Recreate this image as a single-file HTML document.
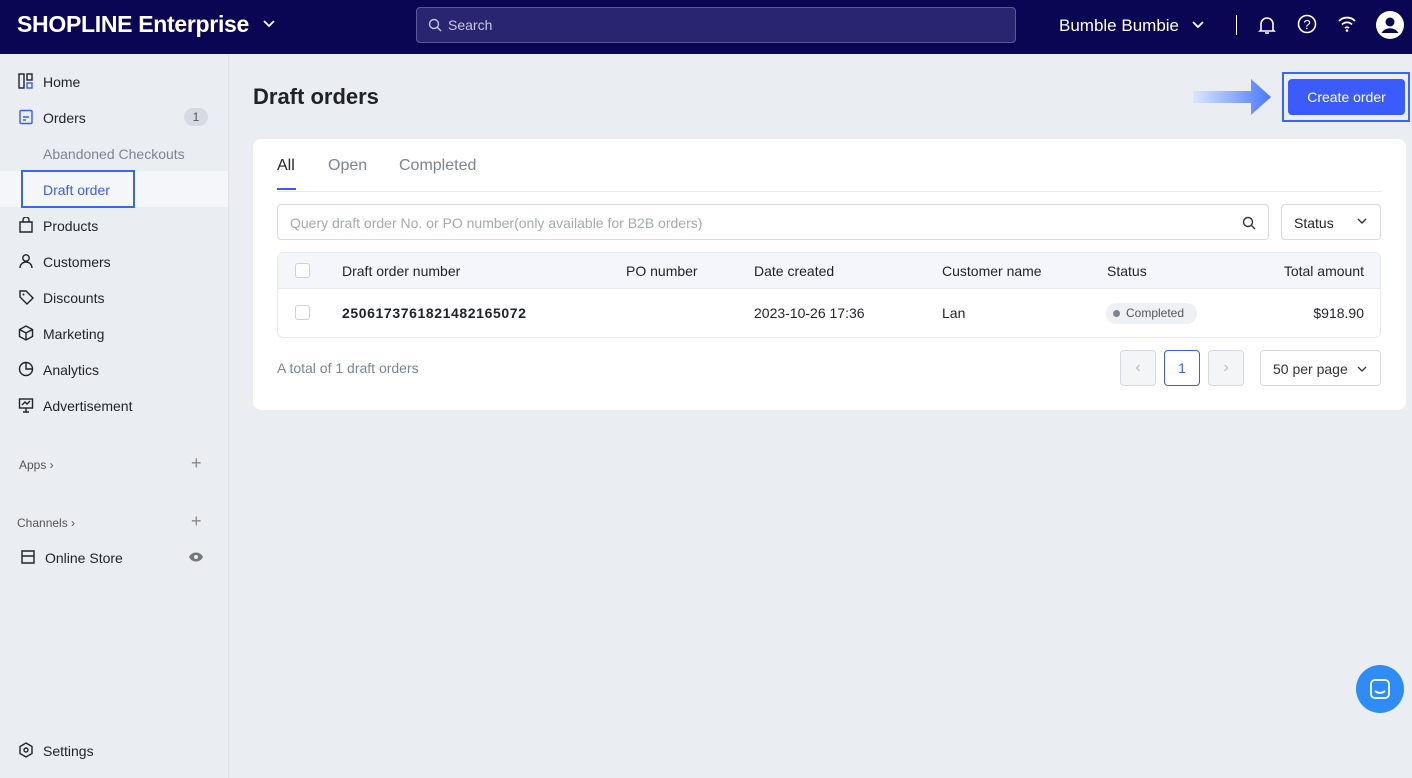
<!DOCTYPE html>
<html><head><style>
*{box-sizing:border-box;margin:0;padding:0}
body{width:1412px;height:778px;overflow:hidden;font-family:"Liberation Sans",sans-serif;background:#eaedf2;color:#1f2329;position:relative}
.top{position:absolute;left:0;top:0;width:1412px;height:54px;background:#0b0653;color:#fff}
.logo{position:absolute;left:17px;top:11px;font-size:23px;font-weight:bold;letter-spacing:-0.3px}
.search{position:absolute;left:416px;top:7px;width:600px;height:36px;border:1px solid #5a5896;border-radius:4px;background:#2a2570;color:#c9c8e0;font-size:14px;padding:9px 0 0 31px}
.side{position:absolute;left:0;top:54px;width:229px;height:724px;background:#eaedf2;border-right:1px solid #dde0e6}
.it{position:absolute;left:0;width:228px;height:36px;font-size:14px;padding:11px 0 0 43px;color:#1f2329}
.ic{position:absolute;left:18px;top:10px;width:16px;height:16px}
.card{position:absolute;left:253px;top:139px;width:1153px;height:271px;background:#fff;border-radius:8px}
.th{position:absolute;top:124px;font-size:14px;color:#1f2329}
.td{position:absolute;top:166px;font-size:14px}
.cb{position:absolute;left:42px;width:15px;height:15px;border:1px solid #cdd1d9;border-radius:3px;background:#fff}
.chev{position:absolute}
</style></head><body>
<div class="top">
<div class="logo">SHOPLINE Enterprise</div>
<svg class="chev" style="left:263px;top:20px" width="12" height="8"><path d="M1 1l5 5 5-5" stroke="#fff" stroke-width="1.8" fill="none"/></svg>
<div class="search"><svg style="position:absolute;left:11px;top:10px" width="14" height="14" viewBox="0 0 14 14"><circle cx="6" cy="6" r="4.5" stroke="#c9c8e0" stroke-width="1.4" fill="none"/><path d="M9.5 9.5L13 13" stroke="#c9c8e0" stroke-width="1.4"/></svg>Search</div>
<div style="position:absolute;left:1059px;top:16px;font-size:17px">Bumble Bumbie</div>
<svg class="chev" style="left:1192px;top:21px" width="12" height="8"><path d="M1 1l5 5 5-5" stroke="#fff" stroke-width="1.8" fill="none"/></svg>
<div style="position:absolute;left:1236px;top:15px;width:1px;height:20px;background:#fff"></div>
<svg style="position:absolute;left:1258px;top:15px" width="18" height="20" viewBox="0 0 18 20"><path d="M3 15V9a6 6 0 0112 0v6l1 1H2z M7 18h4" stroke="#fff" stroke-width="1.6" fill="none"/></svg>
<svg style="position:absolute;left:1297px;top:14px" width="20" height="20"><circle cx="10" cy="10" r="8.5" stroke="#fff" stroke-width="1.6" fill="none"/><text x="10" y="15" fill="#fff" font-size="13" text-anchor="middle" font-family="Liberation Sans">?</text></svg>
<svg style="position:absolute;left:1337px;top:15px" width="20" height="18"><path d="M2 6a11 11 0 0116 0M5 9.5a7 7 0 0110 0M8 13a3 3 0 014 0" stroke="#fff" stroke-width="1.8" fill="none"/><circle cx="10" cy="15.5" r="1.3" fill="#fff"/></svg>
<svg style="position:absolute;left:1376px;top:11px" width="28" height="28"><circle cx="14" cy="14" r="14" fill="#fff"/><circle cx="14" cy="11" r="4.5" fill="#0b0653"/><path d="M5.5 22a10 10 0 0117 0" fill="#0b0653"/></svg>
</div>
<div class="side">
<div class="it" style="top:9px"><svg class="ic" viewBox="0 0 16 16"><rect x="1" y="1" width="5" height="14" stroke="#1f2329" fill="none" stroke-width="1.4"/><rect x="9" y="1" width="5" height="6" stroke="#1f2329" fill="none" stroke-width="1.4"/><rect x="9" y="10" width="5" height="5" stroke="#3b5bfd" fill="none" stroke-width="1.4"/></svg>Home</div>
<div class="it" style="top:45px"><svg class="ic" viewBox="0 0 16 16"><rect x="2" y="1.5" width="12" height="13" rx="1" stroke="#3b5bfd" fill="none" stroke-width="1.4"/><path d="M5 8h6M5 11h3" stroke="#3b5bfd" stroke-width="1.4"/></svg>Orders<span style="position:absolute;left:184px;top:9px;width:24px;height:18px;border-radius:9px;background:#d6dae3;font-size:12px;text-align:center;line-height:18px;color:#555">1</span></div>
<div class="it" style="top:81px;color:#7c8494">Abandoned Checkouts</div>
<div class="it" style="top:117px;background:#f5f6f9;color:#3b5bfd"></div>
<div style="position:absolute;left:21px;top:116px;width:114px;height:38px;border:2px solid #3a66f5;font-size:14px;color:#3b5bfd;padding:10px 0 0 20px">Draft order</div>
<div class="it" style="top:153px"><svg class="ic" viewBox="0 0 16 16"><path d="M2 5h12v10H2z M5 5V3a3 3 0 016 0v2" stroke="#1f2329" fill="none" stroke-width="1.4"/></svg>Products</div>
<div class="it" style="top:189px"><svg class="ic" viewBox="0 0 16 16"><circle cx="8" cy="5" r="3.2" stroke="#1f2329" fill="none" stroke-width="1.4"/><path d="M2 15a6 6 0 0112 0" stroke="#1f2329" fill="none" stroke-width="1.4"/></svg>Customers</div>
<div class="it" style="top:225px"><svg class="ic" viewBox="0 0 16 16"><path d="M2 8V2h6l7 7-6 6z" stroke="#1f2329" fill="none" stroke-width="1.4"/><circle cx="5.5" cy="5.5" r="1" fill="#1f2329"/></svg>Discounts</div>
<div class="it" style="top:261px"><svg class="ic" viewBox="0 0 16 16"><path d="M8 1l6.5 3.5v7L8 15l-6.5-3.5v-7zM1.5 4.5L8 8l6.5-3.5M8 8v7" stroke="#1f2329" fill="none" stroke-width="1.4"/></svg>Marketing</div>
<div class="it" style="top:297px"><svg class="ic" viewBox="0 0 16 16"><circle cx="8" cy="8" r="6.5" stroke="#1f2329" fill="none" stroke-width="1.4"/><path d="M8 1.5V8h6.5" stroke="#1f2329" fill="none" stroke-width="1.4"/></svg>Analytics</div>
<div class="it" style="top:333px"><svg class="ic" viewBox="0 0 16 16"><rect x="1.5" y="2" width="13" height="9" stroke="#1f2329" fill="none" stroke-width="1.4"/><path d="M8 11v4M5 15h6M4 8l3-3 2 2 3-3" stroke="#1f2329" fill="none" stroke-width="1.4"/></svg>Advertisement</div>
<div style="position:absolute;left:19px;top:404px;font-size:12px;color:#555">Apps &rsaquo;</div>
<div style="position:absolute;left:191px;top:399px;font-size:18px;color:#888">+</div>
<div style="position:absolute;left:17px;top:462px;font-size:12px;color:#555">Channels &rsaquo;</div>
<div style="position:absolute;left:191px;top:457px;font-size:18px;color:#888">+</div>
<div class="it" style="top:485px;padding-left:45px"><svg class="ic" style="left:20px" viewBox="0 0 16 16"><path d="M2 2h12v12H2zM2 7h12" stroke="#1f2329" fill="none" stroke-width="1.4"/></svg>Online Store<svg style="position:absolute;left:188px;top:12px" width="16" height="12"><path d="M1 6c3-6 11-6 14 0c-3 6-11 6-14 0z" fill="#777"/><circle cx="8" cy="6" r="2" fill="#eaedf2"/></svg></div>
<div class="it" style="top:678px"><svg class="ic" viewBox="0 0 16 16"><path d="M8 1l6 3.5v7L8 15l-6-3.5v-7z" stroke="#1f2329" fill="none" stroke-width="1.4"/><circle cx="8" cy="8" r="2" stroke="#1f2329" fill="none" stroke-width="1.4"/></svg>Settings</div>
</div>
<div style="position:absolute;left:253px;top:84px;font-size:22px;font-weight:bold;color:#1f2329">Draft orders</div>
<svg style="position:absolute;left:1193px;top:78px" width="80" height="38"><defs><linearGradient id="g"><stop offset="0" stop-color="#dbe6ff"/><stop offset="1" stop-color="#4a78ff"/></linearGradient></defs><path d="M0 13h58V1l20 18-20 18V25H0z" fill="url(#g)"/></svg>
<div style="position:absolute;left:1282px;top:72px;width:128px;height:50px;border:2px solid #3a66f5"></div>
<div style="position:absolute;left:1288px;top:79px;width:117px;height:36px;background:#3b5bfd;border-radius:4px;color:#fff;font-size:14px;text-align:center;line-height:36px">Create order</div>
<div class="card">
<div style="position:absolute;left:24px;top:18px;font-size:16px;color:#1f2329">All</div>
<div style="position:absolute;left:24px;top:49px;width:19px;height:2px;background:#3b5bfd"></div>
<div style="position:absolute;left:75px;top:18px;font-size:16px;color:#7c8494">Open</div>
<div style="position:absolute;left:146px;top:18px;font-size:16px;color:#7c8494">Completed</div>
<div style="position:absolute;left:24px;top:52px;width:1104px;height:1px;background:#e8eaee"></div>
<div style="position:absolute;left:24px;top:65px;width:992px;height:36px;border:1px solid #d6d9df;border-radius:4px;font-size:14px;color:#a4a9b3;padding:10px 0 0 12px">Query draft order No. or PO number(only available for B2B orders)<svg style="position:absolute;right:12px;top:11px" width="14" height="14"><circle cx="6" cy="6" r="4.5" stroke="#333" stroke-width="1.4" fill="none"/><path d="M9.5 9.5L13 13" stroke="#333" stroke-width="1.4"/></svg></div>
<div style="position:absolute;left:1028px;top:65px;width:100px;height:36px;border:1px solid #d6d9df;border-radius:4px;font-size:14px;padding:10px 0 0 12px">Status<svg style="position:absolute;right:13px;top:13px" width="10" height="7"><path d="M1 1l4 4 4-4" stroke="#333" stroke-width="1.4" fill="none"/></svg></div>
<div style="position:absolute;left:24px;top:113px;width:1104px;height:86px;border:1px solid #e8eaee;border-radius:6px;overflow:hidden"><div style="height:36px;background:#f4f6fb;border-bottom:1px solid #e8eaee"></div></div>
<div class="cb" style="top:124px"></div><div class="cb" style="top:166px"></div>
<div class="th" style="left:89px">Draft order number</div>
<div class="th" style="left:373px">PO number</div>
<div class="th" style="left:501px">Date created</div>
<div class="th" style="left:689px">Customer name</div>
<div class="th" style="left:854px">Status</div>
<div class="th" style="right:42px">Total amount</div>
<div class="td" style="left:89px;font-weight:bold;letter-spacing:0.6px">2506173761821482165072</div>
<div class="td" style="left:501px">2023-10-26 17:36</div>
<div class="td" style="left:689px">Lan</div>
<div style="position:absolute;left:853px;top:164px;width:91px;height:21px;background:#eef0f4;border-radius:10px;font-size:12px;color:#555;line-height:21px;padding-left:20px"><span style="position:absolute;left:7px;top:7px;width:7px;height:7px;border-radius:50%;background:#7c8494"></span>Completed</div>
<div class="td" style="right:42px">$918.90</div>
<div style="position:absolute;left:24px;top:221px;font-size:14px;color:#7c8494">A total of 1 draft orders</div>
<div style="position:absolute;left:867px;top:211px;width:36px;height:36px;border:1px solid #d6d9df;border-radius:4px;background:#f4f5f7;color:#bbb;text-align:center;line-height:34px">&lsaquo;</div>
<div style="position:absolute;left:911px;top:211px;width:36px;height:36px;border:1px solid #3b5bfd;border-radius:4px;color:#3b5bfd;text-align:center;line-height:34px;font-size:14px">1</div>
<div style="position:absolute;left:955px;top:211px;width:36px;height:36px;border:1px solid #d6d9df;border-radius:4px;background:#f4f5f7;color:#bbb;text-align:center;line-height:34px">&rsaquo;</div>
<div style="position:absolute;left:1007px;top:211px;width:121px;height:36px;border:1px solid #d6d9df;border-radius:4px;font-size:14px;padding:10px 0 0 12px;color:#333">50 per page<svg style="position:absolute;right:13px;top:15px" width="10" height="7"><path d="M1 1l4 4 4-4" stroke="#333" stroke-width="1.3" fill="none"/></svg></div>
</div>
<div style="position:absolute;left:1356px;top:665px;width:48px;height:48px;border-radius:50%;background:#2f8cf5"><svg style="position:absolute;left:14px;top:14px" width="20" height="20"><rect x="1" y="1" width="18" height="18" rx="4" stroke="#fff" stroke-width="1.8" fill="none"/><path d="M5 12c3 2.5 7 2.5 10 0" stroke="#fff" stroke-width="1.8" fill="none"/></svg></div>
</body></html>
